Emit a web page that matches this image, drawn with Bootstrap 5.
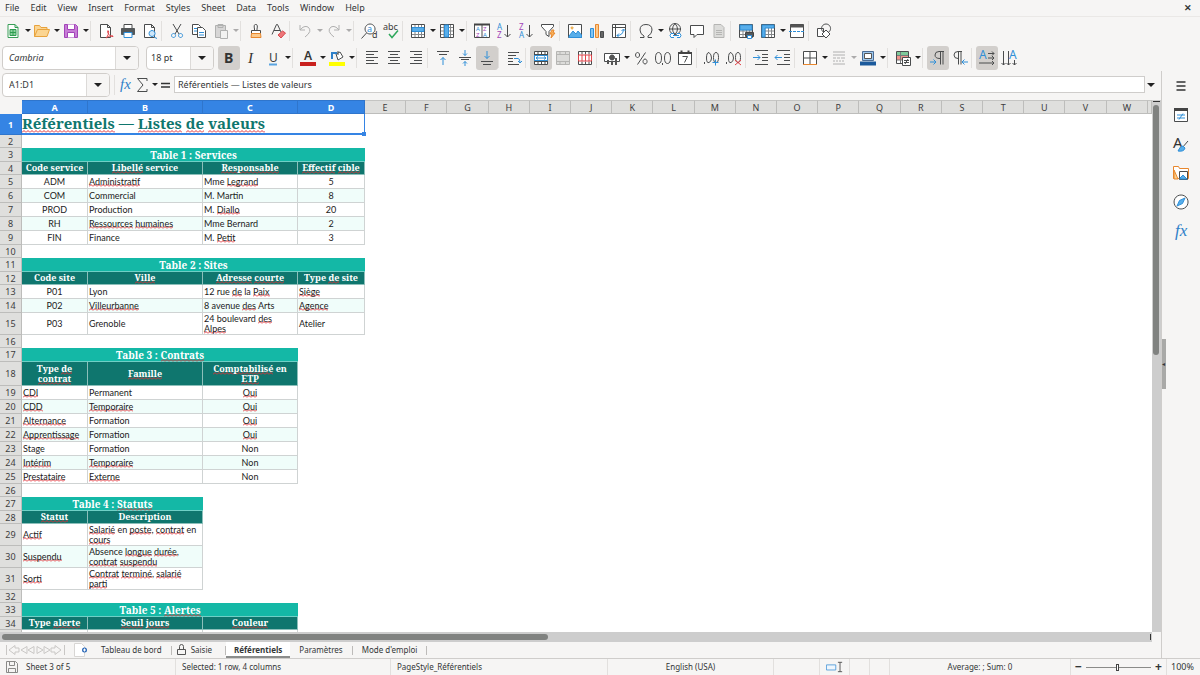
<!DOCTYPE html>
<html lang="fr">
<head>
<meta charset="utf-8">
<meta name="viewport" content="width=device-width, initial-scale=1">
<title>Référentiels</title>
<link href="https://cdn.jsdelivr.net/npm/bootstrap@5.3.0/dist/css/bootstrap.min.css" rel="stylesheet">
<style>
:root{--ui:#f6f5f4;--line:#d3d1cf;--ink:#333637;--blue:#3584e4;--teal:#14b8a6;--deep:#0f766e;--mint:#f0fdfa}
body{background:var(--ui);color:var(--ink);font:9px/12px "Noto Sans",sans-serif}
button,input{font:inherit;color:inherit}
.menubar{height:17px;border-bottom:1px solid #eae8e6;flex:none}
.menubar a{color:inherit;text-decoration:none;padding:0 6px 0 5px}
.toolbar{padding-left:2px;height:27px;flex:none}
.tool{width:22px;height:24px;padding:0;border:0;border-radius:3px;display:flex;align-items:center;justify-content:center;flex:none}
.tool svg{width:16px;height:16px;overflow:visible;display:block;flex:none}
.tool.active,.tool:active{background:#d2cfcc!important}
.tool:disabled{opacity:.4;border:0}
.drop{width:7px;height:24px;padding:0;border:0;background:none;display:flex;align-items:center;justify-content:center;flex:none}
.drop::after,.pick::after{content:"";border:solid transparent;border-width:3px 3px 0;border-top-color:#222}
.drop:disabled{opacity:.35}
.sep{width:5px;height:20px;flex:none;border-left:1px solid #e2e0de;margin:0}
.drop+.sep{margin-left:1px}
.combo{border:1px solid #d0cdca;border-radius:4px;background:#fff;height:24px;overflow:hidden;display:flex;flex:none}
.combo input{border:0;min-width:0;flex:1;padding:0 5px 0 6px;outline:0;background:none}
.pick{width:23px;border:0;border-left:1px solid #dcdad8;background:var(--ui);display:flex;align-items:center;justify-content:center;padding:0}
.pick::after{border-width:4px 4px 0}
.pick.bare{width:12px;border:0;background:none}
.fontname{width:137px}.fontsize{width:68px;margin:0 4px 0 7px}.fontsize input{padding:0 4px}.cellref{width:108px}
.formula{height:29px;padding:0 0 2px 2px;flex:none}
.formula .tool{width:16px}
.formula .line{height:17px;border:1px solid #cfcdcb;background:#fff;padding:0 3px;outline:0}
.sheet{background:#fff;overflow:hidden;min-height:0}
.grid{border-collapse:separate;border-spacing:0;table-layout:fixed;width:100%;font:9px/10px Lato,sans-serif;color:#1b1b1b}
.grid th,.grid td{padding:0;height:14px;vertical-align:middle}
.grid thead th,.grid .num{background:#dfdfdd;border:solid #bdbdbb;border-width:0 1px 1px 0;color:#3d3d3d;text-align:center;font:9px/11px "Noto Sans",sans-serif;overflow:hidden}
.grid thead th{height:14px;border-top:1px solid #c4c4c2}
.grid thead th.on,.grid .num.on{background:var(--blue);color:#fff;font-weight:700;border-color:#2f75cc}
.grid thead th:first-child{background:var(--ui);border-color:var(--ui)}
.grid .cel{border:solid #cfd3d3;border-width:0 1px 1px 0;padding-left:1px}
.grid .mid{text-align:center;padding-left:0}
.grid .alt{background:var(--mint)}
.grid .ban,.grid .hd,.grid .ttl{font-family:"Noto Serif","DejaVu Serif Condensed","DejaVu Serif",serif;font-weight:700;text-align:center;color:#fff}
.grid .ban{background:var(--teal);border-bottom:1px solid #6fd0c6;font-size:10px}
.grid .hd{background:var(--deep);border:solid #8cbfba;border-width:0 1px 1px 0;font-size:9px}
.grid .ttl{position:relative;text-align:left;color:var(--deep);font-size:15px;line-height:17px;border:1px solid var(--blue);border-width:0 1px 2px 0}
.handle{position:absolute;right:-2px;bottom:-3px;width:4px;height:4px;background:var(--blue)}
.grid .r-blank>*,.grid .r-head>*{height:13px}
.grid .r-title>*{height:21px}.grid .r-tall>*{height:22px}.grid .r-head2>*{height:24px}
.bad{background:url("data:image/svg+xml,%3Csvg xmlns='http://www.w3.org/2000/svg' width='4' height='3'%3E%3Cpath d='M0 2.500L2 .5 4 2.500' fill='none' stroke='%23e02f35'/%3E%3C/svg%3E") repeat-x left bottom}
.vbar{width:9px;background:#cdcdcd;padding:1px 1px 0}
.vbar::before{content:"";display:block;height:1px;background:#333;margin-bottom:3px}
.vbar div{width:6px;height:47%;border-radius:3px;background:#808280}
.hbar{height:10px;background:#cdcdcd;margin-right:9px;padding:2px 1px 2px 2px;flex:none}
.hbar div{width:47.5%;border-radius:3px;background:#808280}
.hbar span{width:1px;background:#333}
.side{width:39px;border-left:1px solid #cfcdcb;position:relative}
.side .tool{height:29px}
.nub{position:absolute;left:0;top:50%;width:4px;height:50px;margin-top:-26px;background:#a9a9a7;color:#333;font-size:6px;line-height:50px}
.tabs{height:16px;padding-left:5px;font-size:8px;flex:none}
.tabs a{color:inherit;text-decoration:none;height:16px;padding:0 9px;display:flex;align-items:center}
.tabs a.on{background:#fff;font-weight:700;padding:2px 8px 0;border-bottom:2px solid #8b8d8c}
.tabs .tick{width:1px;height:9px;background:#bdbbb9}
.status{height:17px;flex:none;font-size:8px;border-top:1px solid #cfcdcb;display:grid;grid-template-columns:176fr 215fr 217fr 166fr 46fr 30fr 20fr 20fr 181fr 96fr 33fr}
.status>div{border-right:1px solid #e2e0de;display:flex;align-items:center;padding:0 6px;white-space:nowrap;min-width:0}
.status>div:last-child{border:0;font-size:9px;padding:0 4px}
.zoom{appearance:none;width:65px;height:12px;background:linear-gradient(#8b8b89,#8b8b89) center/100% 1px no-repeat;margin:0}
.zoom::-webkit-slider-thumb{appearance:none;width:3px;height:7px;border:1px solid #444;background:#fff}
.step{border:0;background:none;padding:0;width:10px;font-weight:700;font-size:12px}
</style>
</head>
<body class="vh-100 d-flex flex-column overflow-hidden">

<nav class="menubar d-flex align-items-center" aria-label="Menu">
  <div class="d-flex flex-grow-1" id="menu"></div>
  <button class="border-0 bg-transparent p-0 me-2 fw-bold" aria-label="Close">✕</button>
</nav>
<div class="toolbar d-flex align-items-center" id="std" role="toolbar" aria-label="Standard"></div>
<div class="toolbar d-flex align-items-center" role="toolbar" aria-label="Formatting">
  <div class="combo fontname"><input class="fst-italic" aria-label="Font name" value="Cambria"><button class="pick" aria-label="Choose font"></button></div>
  <div class="combo fontsize"><input aria-label="Font size" value="18 pt"><button class="pick" aria-label="Choose size"></button></div>
  <div class="d-flex align-items-center" id="fmt"></div>
</div>

<div class="d-flex flex-grow-1 overflow-hidden">
  <main class="d-flex flex-column flex-grow-1 overflow-hidden">
    <div class="formula d-flex align-items-center">
      <div class="combo cellref"><input aria-label="Cell reference" value="A1:D1"><button class="pick" aria-label="Named ranges"></button></div>
      <span class="sep ms-1"></span>
      <div class="d-flex align-items-center" id="fx"></div>
      <input class="line flex-grow-1" aria-label="Formula" value="Référentiels — Listes de valeurs">
      <button class="pick bare me-1" aria-label="Expand formula bar"></button>
    </div>
    <div class="d-flex flex-grow-1 overflow-hidden">
      <div class="sheet flex-grow-1"><table class="grid" id="grid"></table></div>
      <div class="vbar flex-shrink-0"><div></div></div>
    </div>
    <div class="hbar d-flex justify-content-between"><div></div><span></span></div>
    <nav class="tabs d-flex align-items-center" aria-label="Sheets">
      <svg width="60" height="12" viewBox="0 0 60 12" fill="none" stroke="#c9c7c5"><path d="M1.500 1v10M10 1.500L4 6l6 4.500V8h4V4h-4zM22 2.500L16 6l6 3.500zM29 2.500L23 6l6 3.500zM32 2.500L38 6l-6 3.500zM39 2.500L45 6l-6 3.500zM50 1.500L56 6l-6 4.500V8h-4V4h4zM59.500 1v10"/></svg>
      <svg class="ms-2" width="15" height="14" viewBox="0 0 15 14"><path d="M1.500.5h7l3 3v10h-10z" fill="#fff" stroke="#d8d6d4"/><circle cx="11.500" cy="7" r="2.500" fill="#2a68b8"/><path d="M10 7h3M11.500 5.500v3" stroke="#fff"/></svg>
      <a href="#" class="ms-1">Tableau de bord</a><span class="tick"></span>
      <a href="#" class="ps-0"><svg class="mx-1" width="11" height="12" viewBox="0 0 11 12" fill="none" stroke="#555"><path d="M1.500 5.500h8v5h-8zM3.500 5.500v-3q0-2 2-2t2 2v3"/></svg>Saisie</a>
      <span class="tick ms-1"></span>
      <a href="#" class="on">Référentiels</a>
      <a href="#">Paramètres</a><span class="tick"></span>
      <a href="#">Mode d'emploi</a><span class="tick"></span>
    </nav>
  </main>
  <aside class="side d-flex flex-column align-items-center flex-shrink-0" id="side"><span class="nub">◂</span></aside>
</div>

<footer class="status">
  <div><svg class="me-2" width="12" height="12" viewBox="0 0 12 12" fill="none" stroke="#8a8a88"><path d="M.5.5h9l2 2v9H.5zM3.500.5v4h5v-4M2.500 11.500v-4h7v4"/></svg>Sheet 3 of 5</div>
  <div>Selected: 1 row, 4 columns</div>
  <div>PageStyle_Référentiels</div>
  <div class="justify-content-center">English (USA)</div>
  <div></div>
  <div><svg width="20" height="12" viewBox="0 0 20 12" fill="none"><path d="M.5 3.500h11v6H.5z" fill="#eef6fd" stroke="#4a97d8"/><path d="M14 .5h5M14 11.500h5M16.500.5v11" stroke="#444"/></svg></div>
  <div></div><div></div>
  <div class="justify-content-center">Average: ; Sum: 0</div>
  <div class="justify-content-center"><button class="step" aria-label="Zoom out">−</button><input class="zoom mx-1" type="range" min="0" max="100" value="49" aria-label="Zoom"><button class="step" aria-label="Zoom in">+</button></div>
  <div>100%</div>
</footer>

<script src="https://cdn.jsdelivr.net/npm/bootstrap@5.3.0/dist/js/bootstrap.bundle.min.js"></script>
<script>
// Icon drawings on a 16-unit grid. D = dark stroke, B = blue stroke, P = any stroke colour.
const P = (c, d, f = 'none', w = 1) => `<path d="${d}" fill="${f}" stroke="${c}" stroke-width="${w}"/>`;
const D = (d, f) => P('#4a4c4d', d, f), B = (d, f) => P('#2f8fd8', d, f);
const T = (x, y, t, s, c = '#3a3a38', k = '') => `<text x="${x}" y="${y}" font-size="${s}" fill="${c}" ${k}>${t}</text>`;
const frame = D('M1.500 1.500h13v13h-13z', '#fff');
const lines = P('#85888a', 'M2 4.500h12M2 8h12M2 11.500h12M5 2v12M8.500 2v12M11.500 2v12');
const icons = {
  New: P('#3a9e58','M3 1.500h7l3 3v10H3z','#fff')+P('#2e9c50','M5 6.500h6v6H5zM5 9.500h6M8 6.500v6','#8ed3a0')+P('#2e9c50','M10 1.500v3h3'),
  Open: P('#e8a33d','M.5 13.500v-11h5l1.500 2h6v2M.5 13.500l3-7h12l-2.500 7z','#fbd592'),
  Save: P('#a244b8','M1.500 1.500h11l2 2v11h-13z','#c77cd6')+P('#a244b8','M4.500 1.500v5h7v-5M4.500 14.500v-5h7v5','#fff'),
  PDF: D('M2.500 1.500h7l3 3v10h-10zM9.500 1.500v3h3','#fff')+P('#e0444a','M8 15c2-2 3-5 2.500-7-.5-1-1.500 0-.5 2 1 2 3 4 5 3.500 1-1-3-1.500-7 1.500'),
  Print: P('#4a4c4d','M4 1.500h8v4H4z','#fff')+P('#54585a','M1.500 5.500h13v6h-13z','#54585a')+P('#2f8fd8','M4 9.500h8v5H4z','#fff'),
  Preview: D('M2.500 1.500h7l3 3v10h-10zM9.500 1.500v3h3','#fff')+B('M12 14l3 1.500M10 7.500a3 3 0 1 0 .1 0z','#cfe7fa'),
  Cut: D('M4 1l6 10M12 1L6 11')+B('M4.500 10.500a2 2 0 1 0 .1 0zM11.500 10.500a2 2 0 1 0 .1 0z'),
  Copy: D('M1.500 1.500h6l2 2v8h-8z','#fff')+D('M6.500 4.500h5l3 3v7h-8z','#fff')+B('M8 9.500h5M8 12h5M3 5.500h3M3 8h3'),
  Paste: D('M2.500 2.500h10v12h-10zM5 1.500h5v3H5z','#aaa')+D('M7.500 7.500h7v8h-7z','#eee'),
  Clone: D('M8 1.500q2 0 1 4.500v1.500H6.500V6q-1-4.500 1-4.500zM3.500 7.500h9v3h-9z','#fff')+P('#e8872d','M3.500 10.500h9l.5 4h-10z','#fbc98c'),
  Clear: D('M2 11.500L6.500 1.500h1L11 9M4 7.500h6')+P('#d94a4e','M8 12l4.500-4 3 2-4.500 5z','#ee777a'),
  Undo: D('M3 2v5h5M3 7q4-5 8-3 5 4-3 10'),
  Redo: D('M13 2v5H8M13 7Q9 2 5 4q-5 4 3 10'),
  Find: D('M9 1a5 5 0 1 0 .1 0zM5.500 10L.5 15.500','#fff')+T(6,9,'a',9,'#2f8fd8')+T(11,15,'d',9),
  Spell: T(0,7,'abc',9)+P('#2fa85c','M6 11l3 3.500 6-7','none',1.5),
  Row: frame+lines+P('#2f8fd8','M2 4.500h12v4H2z','#58aeea'),
  Column: frame+lines+P('#2f8fd8','M5.500 2h4v12h-4z','#58aeea'),
  Sort: D('M.5 1.500h15v13H.5zM8 1.500v13','#fff')+P('#444','M0 1.500h16','none',2)+T(2,8,'A',6,'#2f8fd8')+T(2,14,'Z',6,'#a244b8')+T(9,8,'Z',6,'#a244b8')+T(9,14,'A',6,'#2f8fd8'),
  Ascending: T(1,7,'A',8,'#2f8fd8')+T(1,15,'Z',8,'#a244b8')+D('M11.500 2v12M8.500 11l3 3 3-3'),
  Descending: T(1,7,'Z',8,'#a244b8')+T(1,15,'A',8,'#2f8fd8')+D('M11.500 2v12M8.500 11l3 3 3-3'),
  Filter: D('M1.500 1.500h12v2L9 8.500v5l-3-2v-3l-4.500-5z','#fff')+P('#e8872d','M12 7l-2 4h2l-1 4 4-5h-2l1-3z','#fbb65e'),
  Image: D('M1.500 1.500h13v13h-13z','#fff')+P('#2f8fd8','M2 13l4-5 3 3 2-3 3.500 4v2.500H2z','#58aeea')+P('#e8a33d','M5 4a1 1 0 1 0 .1 0z','#fbd592'),
  Chart: B('M1.500 5.500h3v9h-3z','#83c5f2')+P('#e8872d','M6.500 1.500h3v13h-3z','#fbc98c')+D('M11.500 8.500h3v6h-3z','#666'),
  Pivot: D('M1.500 1.500h13v13h-13zM1.500 4.500h13M4.500 1.500v13','#fff')+B('M6 12.500q6 0 6.500-6M8 10.500l-2 2 2 2M10.500 8l2-2 2 2'),
  Symbol: D('M2 14.500h4V13Q2 11 2 7q0-5.500 6-5.500T14 7q0 4-4 6v1.500h4'),
  Hyperlink: D('M8 .5a5.500 5.500 0 1 0 .1 0zM8 .5q-5 5.500 0 11M8 .5q5 5.500 0 11M2.500 6h11')+B('M7 10.500H4q-2 2 0 4h3M10 10.500h3q2 2 0 4h-3M6 12.500h6','#fff'),
  Comment: D('M1.500 2.500h13v9H8l-3 3v-3H1.500z','#fff'),
  Headers: P('#b5b5b3','M3 1.500h7l3 3v10H3z','#dcdcda')+P('#b5b5b3','M5 7.500h6M5 9.500h6M5 11.500h6'),
  'Print area': frame+lines+P('#2f8fd8','M2 2h12v5H2z','#58aeea')+P('#444','M7.500 9.500h8v4h-8z','#54585a')+B('M9.500 12.500h4v3h-4z','#fff'),
  Freeze: frame+lines+P('#2f8fd8','M2 2h12v3H5v9H2z','#58aeea'),
  Split: D('M1.500 1.500h13v13h-13z','#fff')+P('#555','M1.500 3h13','none',3)+P('#2f8fd8','M0 8.500h3m1 0h3m1 0h3m1 0h3'),
  Shapes: D('M1.500 5.500h6v8h-6z','#fff')+D('M10 1a4.500 4.500 0 1 0 .1 0z')+D('M10 7l4 4-4 4-4-4z','#fff'),
  Bold: T(3,13,'B',14,'#333','font-weight="700"'),
  Italic: T(5,13,'I',15,'#333','font-style="italic" font-family="Liberation Serif"'),
  Underline: T(4,12,'U',12)+P('#5ba4e0','M4 14.500h8','none',2),
  'Font color': T(4,10,'A',12,'#333','font-weight="600"')+P('#c9211e','M0 14h16','none',4),
  Highlight: D('M7 4l4-2 3 5-5 3zM9 1v4','#fff')+P('#2f80c8','M8 3H3v6','none',2)+P('#ff0','M0 14h16','none',4),
  Left: D('M2 1.500h12M2 4.500h8M2 7.500h12M2 10.500h8M2 13.500h12'),
  Center: D('M2 1.500h12M4 4.500h8M2 7.500h12M4 10.500h8M2 13.500h12'),
  Right: D('M2 1.500h12M6 4.500h8M2 7.500h12M6 10.500h8M2 13.500h12'),
  Top: D('M2 1.500h12M4 4.500h8')+B('M8 15V7.500M5.500 10L8 7.500l2.500 2.500'),
  Middle: D('M2 7.500h12M4 9.500h8')+B('M8 0v5.500M6 3.500l2 2 2-2M8 16v-4.500M6 13.500l2-2 2 2'),
  Bottom: D('M2 11.500h12M4 14.500h8')+B('M8 1v7.500M5.500 6L8 8.500 10.500 6'),
  Wrap: D('M2 2.500h11M2 5.500h8M2 8.500h5M2 11.500h5M2 14.500h11')+B('M8 8.500h4q2 0 2 4M12 11l2 2 2-2'),
  'Merge and center': D('M1.500 1.500h13v13h-13zM1.500 4.500h13M1.500 11.500h13M5 1.500v3M8.500 1.500v3M12 1.500v3M5 11.500v3M8.500 11.500v3M12 11.500v3','#fff')+B('M1.500 5.500h13v5h-13zM3 8h10M5 6.500L3 8l2 1.500M11 6.500L13 8l-2 1.500','#fff'),
  Merge: P('#b5b5b3','M1.500 1.500h13v13h-13zM1.500 4.500h13M1.500 11.500h13M5 1.500v3M10.500 1.500v3M5 11.500v3M10.500 11.500v3','#dcdcda'),
  Unmerge: D('M1.500 1.500h13v13h-13zM5 1.500v3M8.500 1.500v3M12 1.500v3M5 11.500v3M8.500 11.500v3M12 11.500v3','#fff')+P('#e0444a','M1.500 5h13v6h-13zM5 5v6M8.500 5v6M12 5v6','#fff'),
  Currency: D('M.5 3.500h15v8H.5z','#fff')+D('M8 5a2.500 2.500 0 1 0 .1 0z','#555')+P('#555','M4 10v4M8 11v4M12 8v7','none',2),
  Percent: D('M12.500 2.500l-8 12M4.500 2.500a2 2.500 0 1 0 .1 0zM12 9a2 2.500 0 1 0 .1 0z'),
  Number: D('M3.500 2.500Q.5 2.500.5 8t3 5.500 3-5.500-3-5.500zM12.500 2.500q-3 0-3 5.500t3 5.500 3-5.500-3-5.500zM7.500 13v2'),
  Date: D('M1.500 2.500h13v12h-13z','#fff')+P('#444','M1 3h14M4.500.5v2M11.500.5v2','none',2)+D('M5.500 6.500h5l-3 6'),
  'Add decimal': D('M.5 12v2M5 2.500q-2.500 0-2.500 5.500t2.500 4.500 2.500-4.500T5 2.500zM12 2.500q-2.500 0-2.500 5t2.500 5 2.500-5-2.500-5z')+B('M11.500 9.500v6M8.500 12.500h6'),
  'Delete decimal': D('M.5 12v2M5 2.500q-2.500 0-2.500 5.500t2.500 4.500 2.500-4.500T5 2.500zM12 2.500q-2.500 0-2.500 5t2.500 5 2.500-5-2.500-5z')+P('#e0444a','M9 10l6 5M15 10l-6 5'),
  Indent: D('M2 .5h13M9 4.500h6M9 7.500h6M9 10.500h6M2 14.500h13')+B('M0 7.500h7M4.500 5L7 7.500 4.500 10'),
  Outdent: D('M2 .5h13M9 4.500h6M9 7.500h6M9 10.500h6M2 14.500h13')+B('M7 7.500H0M2.500 5L0 7.500 2.500 10'),
  Borders: D('M1.500 1.500h13v13h-13zM8 1.500v13M1.500 8h13','#fff')+P('#e8872d','M1 14.500h14'),
  'Border style': D('M2 2h12M2 5h12M2 8h3m1 0h3m1 0h4M2 11h2m1 0h2m1 0h2m1 0h2M2 14h12'),
  'Border color': P('#4a6c96','M2.500 1.500h11v9h-11z','#9cc7ee')+P('#555','M4.500 3.500h7v5h-7z','#fff')+P('#1c5a9c','M0 13.500h16','none',4),
  Conditional: D('M1.500 1.500h12v12h-12z','#fff')+P('#7fc99a','M2 3.500h11','none',3)+P('#f0958c','M2 8h11','none',4)+P('#77797a','M2 5.500h11M2 10h11M5.500 2v11')+D('M7.500 7.500h8v8h-8zM9 10.500h5M9 12.500h5M13 9l-3 5','#fff'),
  'Left to right': D('M14 1.500H9Q5 1.500 5 5t5 3.500M10.500 1.500v13M13 1.500v13')+B('M0 12h6M3.500 9.500L6 12l-2.500 2.500'),
  'Right to left': D('M10 1.500H6Q2 1.500 2 5t4 3.500M6.500 1.500v13M9 1.500v13')+B('M16 12h-6M12.500 9.500L10 12l2.500 2.500'),
  Horizontal: T(0,9,'A',12,'#2f8fd8')+D('M9 3.500h6M13 1.500l2 2-2 2M9 8h6M13 6l2 2-2 2M0 13h15M13 11l2 2-2 2'),
  Vertical: D('M2.500 1v14M.5 13l2 2 2-2M7.500 1v14M5.500 13l2 2 2-2M13.500 10v5M11.500 13l2 2 2-2')+T(8,9,'A',12,'#2f8fd8'),
  'Function wizard': T(1,12,'fx',15,'#2f80c8','font-family="Liberation Serif" font-style="italic"'),
  Sum: D('M12 4V1.500H2.500L8 8l-5.500 6.500H12V12'),
  Equals: P('#333','M3 6.500h9M3 10h9','none',1.5),
  Sidebar: P('#333','M3.500 4h9M3.500 8h9M3.500 12h9','none',1.5),
  Properties: D('M1.500 1.500h13v13h-13z','#fff')+P('#444','M1 2.500h14','none',3)+B('M4 8h8M4 11h8M10 6.500L6 12.500'),
  Styles: T(0,12,'A',15,'#333')+D('M15 5l-6 7','#fff')+B('M10 10q-3 0-5 5 6 1 7-3z','#58aeea'),
  Gallery: P('#e8872d','M.5 13.500v-12h5l1 2h9v10z','#fff')+P('#e8872d','M1 5l4 9H1z','#fbd08c')+D('M6.500 6.500h8v8h-8z','#fff')+B('M7 13l3-3 4 4H7z','#58aeea'),
  Navigator: D('M8 1a7 7 0 1 0 .1 0z','#fff')+B('M12 4L9.500 9.500 4 12l2.500-5.500z','#58aeea'),
  Functions: T(2,13,'fx',17,'#2f80c8','font-family="Liberation Serif" font-style="italic"')
};
// Toolbar notation: "|" separator, "v" suffix drop-down, "*" pressed, "-" disabled.
const tools = spec => spec.split(',').map(s => {
  if (s === '|') return '<span class="sep"></span>';
  const [, name, flags] = s.match(/^([^~]+)~?(.*)$/);
  const off = flags.includes('-') ? 'disabled' : '';
  return `<button class="btn tool ${flags.includes('*') ? 'active' : ''}" title="${name}" aria-label="${name}" ${off}><svg viewBox="0 0 16 16">${icons[name]}</svg></button>` +
    (flags.includes('v') ? `<button class="drop" aria-label="${name} options" ${off}></button>` : '');
}).join('');
const put = (id, html) => document.getElementById(id).insertAdjacentHTML('beforeend', html);
put('std', tools('New~v,Open~v,Save~v,|,PDF,Print,Preview,|,Cut,Copy,Paste~v-,|,Clone,Clear,|,Undo~v-,Redo~v-,|,Find,Spell,|,Row~v,Column~v,|,Sort,Ascending,Descending,Filter,|,Image,Chart,Pivot,|,Symbol~v,Hyperlink,Comment,Headers,|,Print area,Freeze~v,Split,|,Shapes'));
put('fmt', tools('Bold~*,Italic,Underline~v,|,Font color~v,Highlight~v,|,Left,Center,Right,|,Top,Middle,Bottom~*,|,Wrap,|,Merge and center~*,Merge,Unmerge,|,Currency~v,Percent,Number,Date,|,Add decimal,Delete decimal,|,Indent,Outdent,|,Borders~v,Border style~v-,Border color~v,|,Conditional~v,|,Left to right~*,Right to left,|,Horizontal~*,Vertical'));
put('fx', tools('Function wizard,Sum~v,Equals'));
put('side', tools('Sidebar,Properties,Styles,Gallery,Navigator,Functions'));
put('menu', ['File','Edit','View','Insert','Format','Styles','Sheet','Data','Tools','Window','Help'].map(m => `<a href="#">${m}</a>`).join(''));

// Sheet rows: [kind, ...cells]; words between underscores are flagged by the spell checker,
// a leading ">" centres the cell.
const rows = [
  ['title','_Référentiels_ — _Listes_ _de_ _valeurs_'],['blank'],
  ['banner',4,'Table 1 : Services'],['head','Code service','_Libellé_ service','_Responsable_','_Effectif_ _cible_'],
  ['row','>ADM','_Administratif_','Mme _Legrand_','>5'],['row','>COM','Commercial','M. Martin','>8'],['row','>PROD','Production','M. _Diallo_','>20'],['row','>RH','_Ressources_ _humaines_','Mme Bernard','>2'],['row','>FIN','Finance','M. _Petit_','>3'],['blank'],
  ['banner',4,'Table 2 : Sites'],['head','Code site','_Ville_','_Adresse_ _courte_','Type _de_ site'],
  ['row','>P01','Lyon','12 rue _de_ la _Paix_','_Siège_'],['row','>P02','_Villeurbanne_','8 avenue _des_ Arts','_Agence_'],['tall','>P03','Grenoble','24 boulevard _des_<br>_Alpes_','Atelier'],['blank'],
  ['banner',3,'Table 3 : _Contrats_'],['head2','Type _de_<br>_contrat_','_Famille_','_Comptabilisé_ en<br>_ETP_'],
  ['row','_CDI_','Permanent','>_Oui_'],['row','_CDD_','_Temporaire_','>_Oui_'],['row','_Alternance_','Formation','>_Oui_'],['row','_Apprentissage_','Formation','>_Oui_'],['row','Stage','Formation','>Non'],['row','_Intérim_','_Temporaire_','>Non'],['row','_Prestataire_','_Externe_','>Non'],['blank'],
  ['banner',2,'Table 4 : _Statuts_'],['head','_Statut_','Description'],
  ['tall','_Actif_','_Salarié_ en _poste_, _contrat_ en<br>_cours_'],['tall','_Suspendu_','Absence _longue_ _durée_,<br>_contrat_ _suspendu_'],['tall','_Sorti_','_Contrat_ _terminé_, _salarié_<br>_parti_'],['blank'],
  ['banner',3,'Table 5 : _Alertes_'],['head','Type _alerte_','_Seuil_ _jours_','_Couleur_'],['tall','Fin de période<br>d\'essai','','']
];
const mark = s => s.replace(/_([^_]+)_/g, '<span class="bad">$1</span>');
let band = 0;
const body = rows.map(([kind, ...c], i) => {
  let cells = '';
  if (kind === 'title') cells = `<td class="ttl" colspan="4">${mark(c[0])}<span class="handle"></span></td>`;
  else if (kind === 'banner') cells = `<td class="ban" colspan="${c[0]}">${mark(c[1])}</td>`;
  else if (kind.startsWith('head')) { band = 0; cells = c.map(t => `<td class="hd">${mark(t)}</td>`).join(''); }
  else if (kind !== 'blank') {
    const alt = band++ % 2 ? ' alt' : '';
    cells = c.map(t => `<td class="cel${alt}${t[0] === '>' ? ' mid' : ''}">${mark(t.replace(/^>/, ''))}</td>`).join('');
  }
  return `<tr class="r-${kind}"><th class="num${i ? '' : ' on'}" scope="row">${i + 1}</th>${cells}</tr>`;
}).join('');
const letters = 'ABCDEFGHIJKLMNOPQRSTUVW'.split('');
const widths = [22, 66, 115, 95, 67];
put('grid', `<colgroup>${widths.map(w => `<col width="${w}">`).join('')}${'<col>'.repeat(19)}<col width="4"></colgroup>
<thead><tr><th></th>${letters.map((l, i) => `<th scope="col" class="${i < 4 ? 'on' : ''}">${l}</th>`).join('')}<th></th></tr></thead><tbody>${body}</tbody>`);
</script>
</body>
</html>
